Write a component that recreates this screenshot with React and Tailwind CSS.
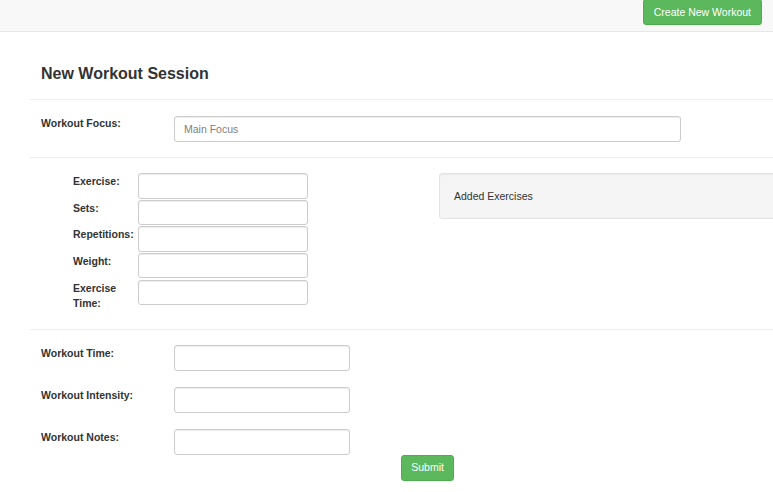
import React from 'react';

const inputCls =
  'h-[25.5px] border border-[#ccc] rounded-[3px] px-[9px] bg-white text-[10.5px] text-[#555] shadow-[inset_0_1px_1px_rgba(0,0,0,0.075)] outline-none placeholder:text-[#808080]';

const exerciseFields = ['Exercise:', 'Sets:', 'Repetitions:', 'Weight:', 'Exercise Time:'];
const sessionFields = ['Workout Time:', 'Workout Intensity:', 'Workout Notes:'];

const App = () => {
  return (
    <div className="min-h-screen overflow-hidden bg-white text-[#333] font-['Liberation_Sans',Arial,sans-serif] text-[10.5px] leading-[15px]">
      {/* top nav */}
      <nav className="h-[32px] bg-[#f8f8f8] border-b border-[#e7e7e7] flex justify-end pr-[11.5px]">
        <button className="-mt-[1px] h-[26px] px-[9.5px] bg-[#5cb85c] border border-[#4cae4c] rounded-[3px] text-white text-[10.5px]">
          Create New Workout
        </button>
      </nav>

      <main className="pl-[30px]">
        <div className="h-[68px] border-b border-[#eee] pt-[33px] pl-[11px]">
          <h4 className="text-[16px] leading-[18px] font-bold">New Workout Session</h4>
        </div>

        <div className="h-[58px] border-b border-[#eee] pt-[16px] pl-[11px] flex items-start">
          <label className="w-[133px] font-bold">Workout Focus:</label>
          <input className={`${inputCls} w-[507px]`} placeholder="Main Focus" />
        </div>

        <div className="h-[172px] border-b border-[#eee] pt-[15px] flex overflow-hidden">
          <div className="pl-[43px] w-[409px] shrink-0">
            {exerciseFields.map((f) => (
              <div key={f} className="flex items-start h-[26.67px]">
                <label className="w-[65px] font-bold mt-[1px]">{f}</label>
                <input className={`${inputCls} w-[169.5px]`} />
              </div>
            ))}
          </div>
          <div className="w-[400px] shrink-0 h-[45.5px] bg-[#f5f5f5] border border-[#e3e3e3] rounded-[3px] pl-[14px] pt-[15px] shadow-[inset_0_1px_1px_rgba(0,0,0,0.05)]">
            Added Exercises
          </div>
        </div>

        <div className="pt-[15px] pl-[11px]">
          {sessionFields.map((f, i) => (
            <div key={f} className={`flex items-start ${i < 2 ? 'h-[42px]' : 'h-[25.5px]'}`}>
              <label className="w-[133px] font-bold mt-[1px]">{f}</label>
              <input className={`${inputCls} w-[175.5px]`} />
            </div>
          ))}
          <button className="mt-[0.5px] ml-[360px] h-[25.5px] px-[9.25px] bg-[#5cb85c] border border-[#4cae4c] rounded-[3px] text-white text-[10.5px]">
            Submit
          </button>
        </div>
      </main>
    </div>
  );
};

export default App;
